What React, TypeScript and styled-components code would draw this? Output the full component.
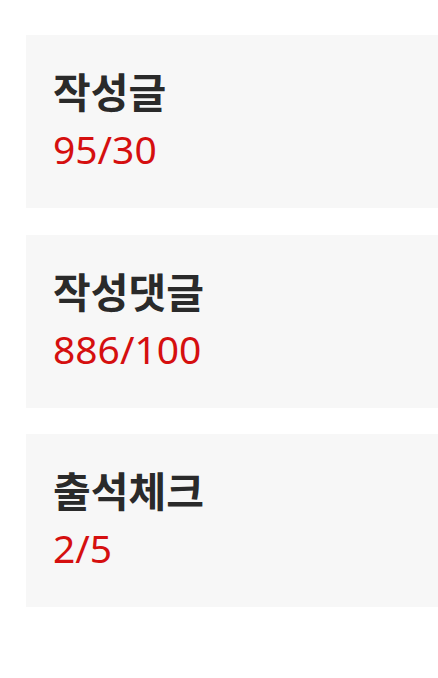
import styled, { createGlobalStyle } from "styled-components";

type Stat = {
  label: string
  value: string
}

const stats: Stat[] = [
  { label: "작성글", value: "95/30" },
  { label: "작성댓글", value: "886/100" },
  { label: "출석체크", value: "2/5" },
]

export default function App() {
  return (
    <>
      <GlobalStyle />
      <StatList>
        {stats.map(s => (
          <StatCard key={s.label}>
            <StatLabel>{s.label}</StatLabel>
            <StatValue>{s.value}</StatValue>
          </StatCard>
        ))}
      </StatList>
    </>
  )
}

const GlobalStyle = createGlobalStyle`
  html, body {
    margin: 0;
    padding: 0;
    background: #fff;
    font-family: "Noto Sans", "Noto Sans CJK KR", sans-serif;
  }
`

const StatList = styled.section`
  display: flex;
  flex-direction: column;
  gap: 26.5px;
  padding: 35px 0 0 26px;
`

const StatCard = styled.div`
  height: 173px;
  box-sizing: border-box;
  padding: 26px 27px 0;
  background: #f7f7f7;
  display: flex;
  flex-direction: column;
`

const StatLabel = styled.h3`
  margin: 0;
  font-family: "Noto Sans CJK KR", sans-serif;
  font-size: 41px;
  font-weight: 700;
  line-height: 58px;
  color: #2a2a2a;
`

const StatValue = styled.p`
  margin: 0;
  font-size: 39px;
  font-weight: 400;
  line-height: 60px;
  color: #d50f0f;
`
